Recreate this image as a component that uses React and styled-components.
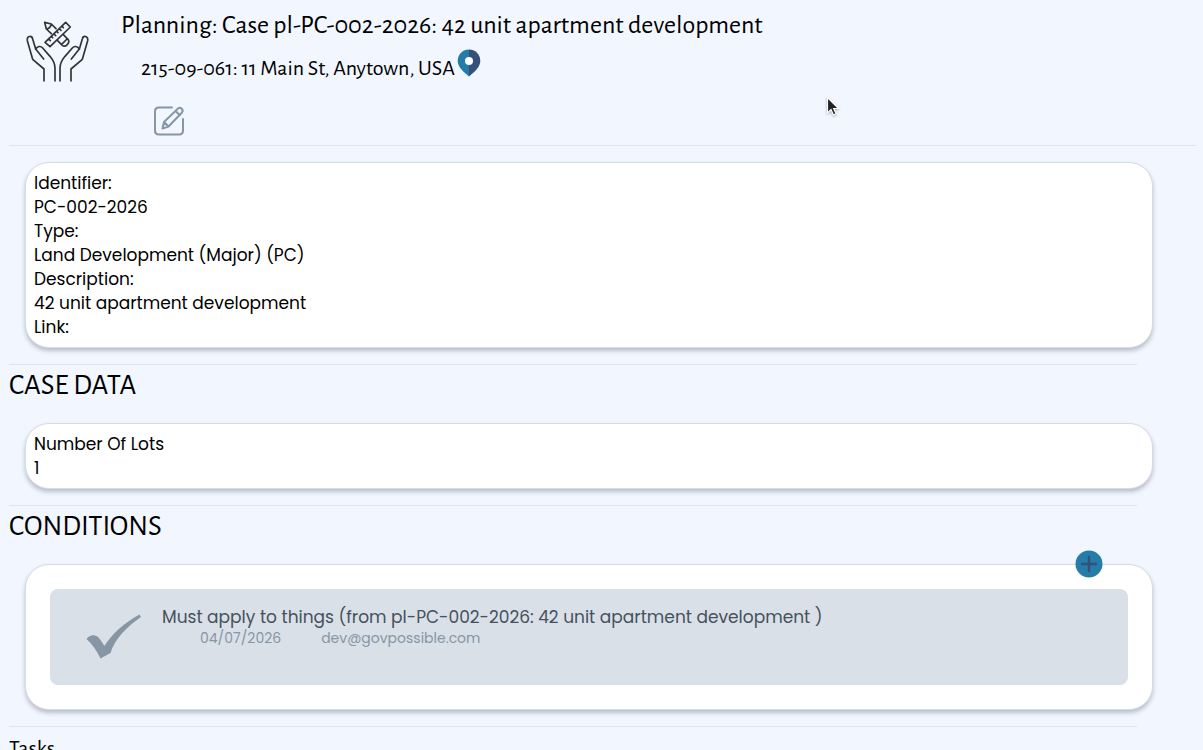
import React from "react";
import styled, { createGlobalStyle } from "styled-components";

const colors = {
  page: "#f1f6ff",
  line: "#dfe3ea",
  border: "#d5dce6",
  card: "#fff",
  condition: "#d9e0e8",
  conditionText: "#46515c",
  muted: "#8796a5",
  blue: "#257ca9",
  navy: "#35507a",
};

const headingFont = `"Alegreya Sans", Lato, sans-serif`;
const bodyFont = `Poppins, Inter, sans-serif`;

const GlobalStyle = createGlobalStyle`
  body {
    margin: 0;
    background: ${colors.page};
    color: #000;
    font-family: ${bodyFont};
    font-size: 17px;
    line-height: 24px;
  }
`;

const Page = styled.main`
  height: 100vh;
  padding: 1px 7px 0 9px;
  overflow: hidden;
  box-sizing: border-box;
`;

const Header = styled.header`
  display: flex;
  align-items: flex-start;
  gap: 32px;
  padding: 0 16px;
  border-bottom: 1px solid ${colors.line};
`;

const HandsIcon = styled.svg`
  flex: none;
  width: 64px;
  height: 64px;
  margin-top: 18px;
`;

const Title = styled.h1`
  margin: 0;
  font: 400 26px/48px ${headingFont};
`;

const Address = styled.p`
  display: flex;
  align-items: center;
  gap: 2px;
  margin: 0;
  padding-left: 20px;
  font: 400 22px/38px ${headingFont};
`;

const IconButton = styled.button`
  display: flex;
  padding: 0;
  border: 0;
  background: none;
  cursor: pointer;
`;

const PinLink = styled.a`
  display: flex;
  padding-bottom: 10px;
`;

const Toolbar = styled.div`
  padding: 18px 0 8px 32px;
`;

const Section = styled.section`
  width: 95%;
  border-bottom: 1px solid ${colors.line};
`;

const SectionTitle = styled.h2`
  margin: 0;
  font: 400 ${({ $small }) => ($small ? "22px" : "29px")} / 42px ${headingFont};
`;

const Card = styled.div`
  position: relative;
  width: 100%;
  margin: 16px;
  padding: ${({ $roomy }) => ($roomy ? "24px" : "8px")};
  box-sizing: border-box;
  border: 1px solid ${colors.border};
  border-radius: 24px;
  background: ${colors.card};
  box-shadow: 0 3px 4px rgba(60, 65, 75, 0.3);
`;

const Fields = styled.dl`
  margin: 0;
`;

const FieldName = styled.dt``;

const FieldValue = styled.dd`
  margin: 0;
`;

const AddButton = styled(IconButton)`
  position: absolute;
  top: -15px;
  right: 49px;
`;

const Condition = styled.article`
  display: flex;
  min-height: 96px;
  padding: 16px 36px;
  box-sizing: border-box;
  gap: 20px;
  border-radius: 8px;
  background: ${colors.condition};
  color: ${colors.conditionText};
`;

const CheckIcon = styled.svg`
  flex: none;
  width: 56px;
  height: 64px;
`;

const ConditionText = styled.p`
  margin: 0;
`;

const ConditionMeta = styled.div`
  display: flex;
  gap: 40px;
  padding-left: 38px;
  color: ${colors.muted};
  font-size: 14px;
  line-height: 18px;
`;

const Pointer = styled.svg`
  position: fixed;
  top: 96px;
  left: 826px;
  width: 14px;
  height: 20px;
  pointer-events: none;
  filter: drop-shadow(0 1px 1px rgba(0, 0, 0, 0.3));
`;

const caseFields = [
  ["Identifier:", "PC-002-2026"],
  ["Type:", "Land Development (Major) (PC)"],
  ["Description:", "42 unit apartment development"],
  ["Link:", ""],
];

const conditions = [
  {
    text: "Must apply to things (from pl-PC-002-2026: 42 unit apartment development )",
    date: "04/07/2026",
    author: "dev@govpossible.com",
  },
];

const FieldList = ({ fields }) => (
  <Fields>
    {fields.map(([name, value]) => (
      <React.Fragment key={name}>
        <FieldName>{name}</FieldName>
        {value && <FieldValue>{value}</FieldValue>}
      </React.Fragment>
    ))}
  </Fields>
);

const Hand = () => (
  <>
    <path d="M132 243V207L98 178L82 122C80 106 96 106 98 117L107 147L131 177" />
    <path d="M107 147C112 138 122 137 128 144L150 169C160 181 165 190 165 205V243" />
  </>
);

const Hands = () => (
  <HandsIcon
    viewBox="75 57 192 192"
    fill="none"
    stroke="#333"
    strokeWidth="5"
    strokeLinecap="round"
    strokeLinejoin="round"
    aria-hidden="true"
  >
    <Hand />
    <g transform="translate(345 0) scale(-1 1)">
      <Hand />
    </g>
    <path d="M154 101L139 87L134 67L154 72L168 86M139 87C146 86 152 82 154 72M172 121L187 136C196 144 212 128 204 118L190 104M185 133L201 117" />
    <path d="M135 127L197 67L211 81L150 140ZM146 117L151 122M154 109L158 113M162 102L167 107M170 94L174 98M178 86L183 91M186 79L190 83" />
  </HandsIcon>
);

const Pin = () => (
  <svg width="24" height="28" viewBox="0 0 24 28" aria-hidden="true">
    <path d="M12 0.5A11.3 11.3 0 0 0 0.7 11.8C0.7 18 6 22.5 12 27.5Z" fill={colors.blue} />
    <path d="M12 0.5A11.3 11.3 0 0 1 23.3 11.8C23.3 18 18 22.5 12 27.5Z" fill={colors.navy} />
    <circle cx="12" cy="12" r="4" fill="#fff" />
  </svg>
);

const Edit = () => (
  <svg
    width="32"
    height="32"
    viewBox="0 0 32 32"
    fill="none"
    stroke={colors.muted}
    strokeWidth="2"
    strokeLinecap="round"
    strokeLinejoin="round"
    aria-hidden="true"
  >
    <path d="M19 2.5H6Q2 2.5 2 6.5V25.5Q2 29.5 6 29.5H26Q30 29.5 30 25.5V14" />
    <path d="M9.5 23.5L11 17L25 3.5C27.5 1.5 31 5 29 7.5L15.5 21.5ZM11 17L15.5 21.5M22.5 6L26.8 10.2" />
  </svg>
);

const Plus = () => (
  <svg width="28" height="28" viewBox="0 0 28 28" aria-hidden="true">
    <circle cx="14" cy="14" r="13.5" fill={colors.blue} />
    <path d="M14 7V21M7 14H21" stroke={colors.navy} strokeWidth="2.4" strokeLinecap="round" />
  </svg>
);

const Check = () => (
  <CheckIcon viewBox="0 0 56 64" aria-hidden="true">
    <path
      d="M0.5 34C4 29.5 9.5 29 13 33C15 35.5 17 38.5 18.3 41C27 28 38 18 53.5 9.5L55 12C42 21 29 33 24.5 48L14.5 53.5C11 46 6 39 0.5 34Z"
      fill={colors.muted}
    />
  </CheckIcon>
);

const App = () => {
  return (
    <>
      <GlobalStyle />
      <Page>
        <Header>
          <Hands />
          <div>
            <Title>
              Planning: Case pl-PC-002-2026: 42 unit apartment development
            </Title>
            <Address>
              215-09-061: 11 Main St, Anytown, USA
              <PinLink href="#map" aria-label="Show on map">
                <Pin />
              </PinLink>
            </Address>
            <Toolbar>
              <IconButton type="button" aria-label="Edit case">
                <Edit />
              </IconButton>
            </Toolbar>
          </div>
        </Header>

        <Section>
          <Card>
            <FieldList fields={caseFields} />
          </Card>
        </Section>

        <Section>
          <SectionTitle>CASE DATA</SectionTitle>
          <Card>
            <FieldList fields={[["Number Of Lots", "1"]]} />
          </Card>
        </Section>

        <Section>
          <SectionTitle>CONDITIONS</SectionTitle>
          <Card $roomy>
            <AddButton type="button" aria-label="Add condition">
              <Plus />
            </AddButton>
            {conditions.map(({ text, date, author }) => (
              <Condition key={text}>
                <Check />
                <div>
                  <ConditionText>{text}</ConditionText>
                  <ConditionMeta>
                    <span>{date}</span>
                    <span>{author}</span>
                  </ConditionMeta>
                </div>
              </Condition>
            ))}
          </Card>
        </Section>

        <SectionTitle $small>Tasks</SectionTitle>
      </Page>

      <Pointer viewBox="0 0 14 20" aria-hidden="true">
        <path
          d="M1.5 1.5V17L5 13.5L7.5 19L10 17.8L7.7 12.5H12.5Z"
          fill="#222"
          stroke="#fff"
          strokeWidth="1.2"
        />
      </Pointer>
    </>
  );
};

export default App;
